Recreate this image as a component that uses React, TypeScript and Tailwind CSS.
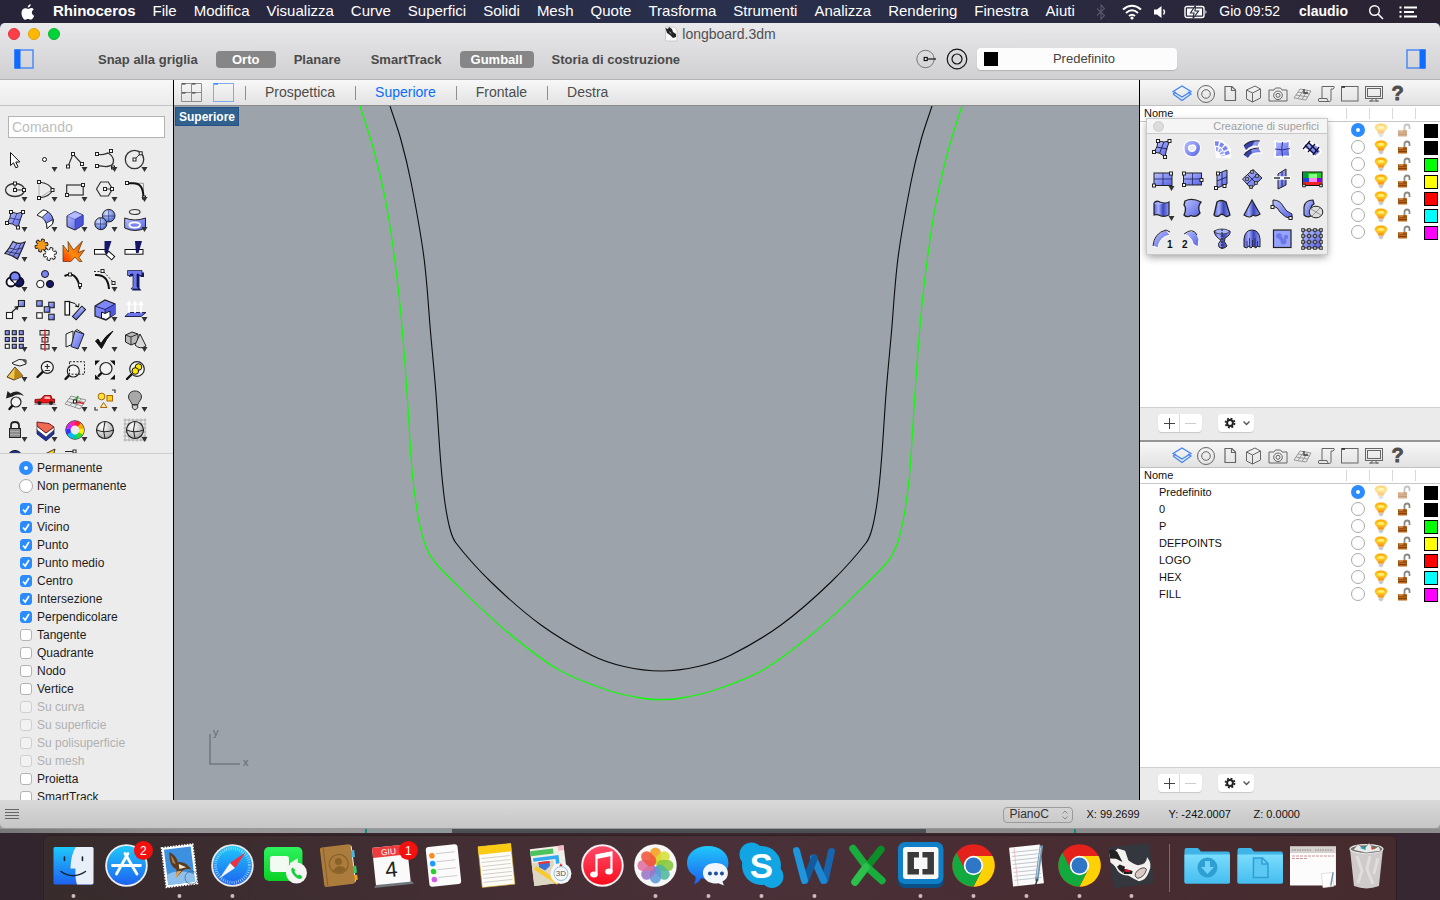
import React from "react";

type Pt = [number, number];
type Tool = { name: string; art: React.ReactNode; menu?: boolean };

const INK = "#222";
const NAVY = "#15156a";

function Nodes({ at, s = 3 }: { at: Pt[]; s?: number }) {
  return (
    <>
      {at.map(([x, y], i) => (
        <rect key={i} x={x - s / 2} y={y - s / 2} width={s} height={s} fill="#fff" stroke="#222" strokeWidth={1} />
      ))}
    </>
  );
}

function Boxes({ at, s = 5, fill = "url(#blue)" }: { at: Pt[]; s?: number; fill?: string }) {
  return (
    <>
      {at.map(([x, y], i) => (
        <rect key={i} x={x - s / 2} y={y - s / 2} width={s} height={s} fill={fill} stroke="#222" strokeWidth={1.1} />
      ))}
    </>
  );
}

function Lens({ x, y, r = 6, hx, hy }: { x: number; y: number; r?: number; hx: number; hy: number }) {
  const k = r * 0.72;
  return (
    <>
      <path d={`M${x - k} ${y + k}L${hx} ${hy}`} stroke="#111" strokeWidth={2.4} strokeLinecap="round" />
      <circle cx={x} cy={y} r={r} fill="#f4f4f4" fillOpacity={0.8} stroke="#222" strokeWidth={1.2} />
    </>
  );
}

function Cog({ x, y, fill }: { x: number; y: number; fill: string }) {
  return (
    <g transform={`translate(${x} ${y})`}>
      <g stroke="#222" strokeWidth="1">
        {[0, 60, 120, 180, 240, 300].map((a) => <rect key={a} x="-1.500" y="-6.500" width="3" height="4" rx="0.800" fill={fill} transform={`rotate(${a + 15})`} />)}
      </g>
      <circle r="4" fill={fill} />
    </g>
  );
}

function Cube() {
  return (
    <>
      <path d="M7 11L15 6.500L23 10V20L15 25L7 21.500Z" fill="url(#blue)" stroke={INK} />
      <path d="M7 11L15 6.500L23 10L15 14.500Z" fill="#b4bcff" stroke="#44a" strokeWidth={0.5} />
      <path d="M15 14.500L23 10V20L15 25Z" fill="#4a55d8" stroke="#339" strokeWidth={0.5} />
    </>
  );
}

const TOOLS: Tool[] = [
  { name: "Seleziona", art: <path d="M10.500 7.500V20.500L13.500 17.800L15.800 22.800L18 21.800L15.800 17H19.800Z" fill="#fff" stroke="#111" /> },
  { name: "Punto", menu: true, art: <circle cx="14.500" cy="14.500" r="2" fill="#fff" stroke="#111" /> },
  { name: "Polilinea", menu: true, art: <><path d="M8 21.500L13 9L22 19" fill="none" stroke="#333" strokeWidth="1.200" /><Nodes at={[[8, 21.5], [13, 9], [22, 19]]} /></> },
  { name: "Curva", menu: true, art: <><path d="M7 9C14 11 16 8 18 8C25 12 26 21 17 21.500C13 22 10 20 7 21" fill="none" stroke="#333" strokeWidth="1.300" /><Nodes at={[[7, 9], [21, 6], [7, 21], [23, 22.5]]} /></> },
  { name: "Cerchio", menu: true, art: <><circle cx="14.500" cy="14.500" r="9.200" fill="none" stroke="#333" strokeWidth="1.300" /><path d="M14.500 14.500L20.700 8.300" stroke="#333" /><Nodes at={[[14.5, 14.5], [20.7, 8.3]]} /></> },
  { name: "Ellisse", menu: true, art: <><ellipse cx="15" cy="15" rx="9.500" ry="6.500" fill="none" stroke="#333" strokeWidth="1.300" /><path d="M15 8.500V15H24" fill="none" stroke="#333" /><Nodes at={[[15, 8.5], [15, 15], [24, 15]]} /></> },
  { name: "Arco", menu: true, art: <><path d="M9 7V23M9 23L22 15" stroke="#999" strokeWidth="0.800" /><path d="M9 7C17 8 21 11 22.500 15C21 19 17 22 9 23" fill="none" stroke="#333" strokeWidth="1.200" /><Nodes at={[[9, 7], [9, 23], [22.5, 15]]} /></> },
  { name: "Rettangolo", menu: true, art: <><rect x="6.700" y="10" width="16.500" height="10" fill="none" stroke="#333" strokeWidth="1.200" /><Nodes at={[[7, 20], [23, 10]]} /></> },
  { name: "Poligono", menu: true, art: <><path d="M10.700 7H18.300L22.500 14L18.300 21H10.700L6.500 14Z" fill="none" stroke="#333" strokeWidth="1.200" /><path d="M15 14H22" stroke="#333" /><Nodes at={[[15, 14], [22, 14]]} /></> },
  { name: "Raccordo", menu: true, art: <><path d="M8 8.300H23.500V23" fill="none" stroke="#999" /><path d="M8 8.300H13C20 8.300 23 12 23.500 22" fill="none" stroke="#111" strokeWidth="2" /><Nodes at={[[7, 8], [24, 22.5]]} /></> },
  { name: "Superficie da punti", menu: true, art: <><path d="M11 7Q17 10 23 7Q20 15 18 22.500Q13 18 7 18Q11 13 11 7Z" fill="url(#blue)" stroke={INK} /><path d="M9.500 13Q15 14 20.500 15M17 8.500Q14 15 12.500 19" fill="none" stroke="#226" strokeWidth="0.700" /><Nodes at={[[11, 7], [23, 7], [7, 18], [18, 22.5]]} /></> },
  { name: "Sweep", menu: true, art: <><path d="M7 10L13 5Q21 6 23.500 15L22.500 19L17 23.500Q17 13 7 10Z" fill="url(#blue)" stroke={INK} /><path d="M7 10L13 5Q16 5 18 7L12 12.500ZM17 23.500L16.500 18L23 14.500L22.500 19Z" fill="#fff" stroke={INK} strokeWidth="0.900" /></> },
  { name: "Parallelepipedo", menu: true, art: <Cube /> },
  { name: "Sfere", menu: true, art: <><circle cx="18.700" cy="10.700" r="6.300" fill="url(#ball)" stroke={INK} /><circle cx="10.800" cy="18.700" r="6" fill="url(#ball)" stroke={INK} /><path d="M12.500 11H25M18.700 4.500V17M5 19H17M10.500 13V24.500" stroke="#226" strokeWidth="0.600" /></> },
  { name: "Proietta anello", menu: true, art: <><ellipse cx="14.700" cy="7" rx="5.300" ry="2.500" fill="none" stroke="#333" strokeWidth="1.200" /><path d="M4.700 13Q15 17 25.500 13V23Q15 28 4.700 23Z" fill="url(#blue)" stroke={INK} /><ellipse cx="14.700" cy="20" rx="5.300" ry="2.700" fill="#7c85f4" stroke="#fff" strokeWidth="1.800" /></> },
  { name: "Superficie reticolo", menu: true, art: <><path d="M5 18.500Q9 14 13 6.500Q18 10 25 7Q22 15 17.500 24Q12 20 5 18.500Z" fill="url(#blue)" stroke={INK} strokeWidth="1.200" /><path d="M9.500 13Q15 16 22 13M7 16.500Q14 18 20 19M17 8.500Q14 15 9 19.500M21 8.500Q18 16 13 21.500" fill="none" stroke="#224" strokeWidth="0.800" /></> },
  { name: "Blocchi", art: <><Cog x={11.5} y={10.5} fill="#f59a1b" /><Cog x={20} y={19} fill="#fff" /></> },
  { name: "Esplodi", art: <path d="M3 26.500V10L8.500 17L8 6.500L13.500 15L22.500 6L18 17.500L24.500 15L19 22.500L22 26.500H19L15 22L11 26.500Z" fill="url(#fire)" stroke="#531" strokeWidth="0.700" /> },
  { name: "Tronca", art: <><rect x="4.500" y="14.500" width="11.500" height="4.700" fill="#fff" stroke="#111" /><rect x="16.500" y="18" width="8" height="4.500" transform="rotate(42 20 20)" fill="#fff" stroke="#111" /><path d="M14.500 6H21.500L17 19.500L14.500 17Z" fill={NAVY} /></> },
  { name: "Suddividi", art: <><rect x="5" y="14.500" width="18" height="4.700" fill="#fff" stroke="#111" /><path d="M15 6H22L18.500 18H16Z" fill={NAVY} /></> },
  { name: "Unione booleana", menu: true, art: <g stroke="#0a0a20" strokeWidth="1.800"><circle cx="11" cy="17" r="4.500" fill="#fff" /><circle cx="19" cy="17" r="4.500" fill={NAVY} /><circle cx="15" cy="12" r="4.800" fill="#7b84f5" /><path d="M12 15L15 19L18 15Z" fill="#fff" strokeWidth="0.800" /></g> },
  { name: "Raggruppa", art: <g stroke="#111"><circle cx="15" cy="9" r="3.500" fill="#7b84f5" /><circle cx="10.300" cy="19" r="3.700" fill="#fff" /><circle cx="20" cy="19" r="3.600" fill={NAVY} /></g> },
  { name: "Modifica punti", art: <><path d="M4.500 11Q17 5 20 24" fill="none" stroke="#111" strokeWidth="2" /><Nodes at={[[10, 9.5], [20, 20]]} /></> },
  { name: "Punti di controllo", menu: true, art: <><path d="M5 10Q18 9 19 24" fill="none" stroke="#111" strokeWidth="2" /><path d="M4 6.500H12M14 7L23 17" fill="none" stroke="#333" strokeDasharray="2 1.500" /><Nodes at={[[12.5, 6], [23.5, 18]]} /></> },
  { name: "Testo", art: <><path d="M9 7.500H24V12L21 12L19.500 10.500V23L21.500 25.500H12L13.500 23V11L9 12Z" fill="#111b66" /><path d="M7.500 5.500H22V10.500H20L18.500 9H17V21.500L19 24H11L13 21.500V9H11L9.500 10.500H7.500Z" fill="#6f7af2" stroke="#113" strokeWidth="0.700" /></> },
  { name: "Sposta", menu: true, art: <><path d="M12 17L18 11.500M18 11.500L14.500 12.200M18 11.500L17 15" stroke="#222" strokeWidth="1.200" /><Boxes at={[[9.5, 20.5]]} s={6} fill="#fff" /><Boxes at={[[21.5, 8.5]]} s={6} /></> },
  { name: "Copia", art: <><Boxes at={[[9.5, 8.5], [21.5, 10], [17, 14.5], [21.5, 22]]} s={5.5} /><Boxes at={[[9.5, 20.5]]} s={5.5} fill="#fff" /></> },
  { name: "Ruota", art: <><rect x="5" y="6.500" width="4.500" height="13.500" fill="#fff" stroke="#111" strokeWidth="1.200" /><rect x="16.500" y="11" width="5" height="14" transform="rotate(42 19 18)" fill="url(#blue)" stroke="#111" /><path d="M10 7Q16 7.500 18 12M18.500 12L15 11M18.500 12L19 8.500" fill="none" stroke="#111" /></> },
  { name: "Modifica solido", menu: true, art: <><path d="M5 11L15 5L25 9V19L16 25L5 21Z" fill="#7d87f6" stroke={INK} strokeWidth="1.200" /><path d="M15 14.500L25 9V19L15 25Z" fill="#4f5ade" /><path d="M5 11L15 14.500L25 9M15 14.500V25" fill="none" stroke="#226" /><path d="M11.500 17L15 18.500L20 16V22L16 24.500L11.500 23Z" fill="#fff" stroke="#111" /></> },
  { name: "Estrudi", menu: true, art: <><path d="M5 21.500L9 17.500H26L21 21.500Z" fill="#6b76ee" stroke="#225" /><path d="M9 18V8M15 18V8M21 18V8M7 10L9 7L11 10M13 10L15 7L17 10M19 10L21 7L23 10" stroke="#fff" strokeWidth="1.600" fill="none" /></> },
  { name: "Serie", menu: true, art: <><Boxes at={[[7.3, 7.7], [14.3, 7.7], [21.3, 7.7], [7.3, 14.5], [14.3, 14.5], [21.3, 14.5], [14.3, 21.3], [21.3, 21.3]]} s={4} /><Boxes at={[[7.3, 21.3]]} s={4} fill="#fff" /></> },
  { name: "Allinea", menu: true, art: <><rect x="10" y="5.500" width="9" height="4.500" fill="#ddd" stroke="#222" /><rect x="12" y="12.500" width="6" height="4.500" fill="#ddd" stroke="#222" /><rect x="11" y="19.500" width="8" height="4.500" fill="#ddd" stroke="#222" /><path d="M15 4.500V26" stroke="#e02020" strokeWidth="1.400" /></> },
  { name: "Orienta", menu: true, art: <><path d="M6 9L13 6V19L6 22Z" fill="#f2f2f2" stroke="#222" /><path d="M15 6L24 9L18 24L11 21.500Z" fill="url(#blue)" stroke="#222" /><path d="M15 6L17 4.500L24 9" fill="none" stroke="#222" /></> },
  { name: "Controlla", menu: true, art: <path d="M5.500 16L8 14L11 18.500Q15 11 23 6Q16 14 11.500 23.500Z" fill="#111" stroke="#111" /> },
  { name: "Mesh", menu: true, art: <><path d="M5.500 10L12 7L18 9V17L11 20L5.500 17Z" fill="#b9b9b9" stroke="#222" /><path d="M5.500 10L11 12L18 9M11 12V20" fill="none" stroke="#333" /><path d="M20 9L26 21Q20 25 15 20Z" fill="#d8d8d8" stroke="#222" /></> },
  { name: "Analizza", menu: true, art: <><path d="M7 22L15 12L23 21L14 25Z" fill="#f0c84e" stroke="#432" /><path d="M15 12L23 21L14 25Z" fill="#b98619" /><path d="M12 8L19 4.500L26 5V9L20 11L14 9.500Z" fill="#f1f1f1" stroke="#222" /><path d="M22 5L26 5V9" fill="#555" /></> },
  { name: "Zoom dinamico", art: <><Lens x={17.3} y={12.3} hx={7.5} hy={22} /><path d="M17.300 9V14M14.800 11.500H19.800M14.800 15.500H19.800" stroke="#222" strokeWidth="1.100" /></> },
  { name: "Zoom finestra", art: <><Lens x={13.3} y={16} hx={5.5} hy={24} /><rect x="9.500" y="6.700" width="15" height="12.500" fill="none" stroke="#222" strokeDasharray="2 1.500" /></> },
  { name: "Zoom estensioni", art: <><Lens x={16} y={13.5} hx={8.5} hy={21} /><path d="M5 5.500H10L5 10.500ZM25 5.500H20L25 10.500ZM5 24.500V19.500L10 24.500ZM25 24.500V19.500L20 24.500Z" fill="#111" /></> },
  { name: "Zoom selezione", art: <><Lens x={17} y={14} r={7.3} hx={7} hy={24} /><circle cx="18.500" cy="12" r="3.300" fill="#ffe600" stroke="#111" /><circle cx="15.300" cy="16" r="3.300" fill="#ffe600" stroke="#111" /></> },
  { name: "Annulla vista", menu: true, art: <><Lens x={16} y={17} r={5} hx={9.5} hy={24} /><path d="M6 13.500L7.500 6L10.500 8.500Q18 3.500 24 11Q17 8 12.500 11.500Z" fill="#222" /></> },
  { name: "Viste", menu: true, art: <><path d="M4 19.500H26" stroke="#888" strokeWidth="0.700" /><path d="M5 18V14.500L11 14L14 10.500H21L22 14H24.500V18Z" fill="#e81818" stroke="#700" strokeWidth="0.800" /><path d="M14.500 14V11.500H19.500L20.500 14Z" fill="#fff" opacity="0.700" /><circle cx="9.500" cy="18" r="2" fill="#222" /><circle cx="21" cy="18" r="2" fill="#222" /></> },
  { name: "Piano di costruzione", menu: true, art: <><path d="M5 19L11 11L26 15L20 24ZM7 16.500L22 21M9 13.500L24 17.500M10 20.500L16 12.500M15 22L21 14" fill="none" stroke="#888" strokeWidth="0.900" /><path d="M16 16L18 11" stroke="#1a1" strokeWidth="1.600" /><path d="M16 17L24 18.500" stroke="#d22" strokeWidth="1.600" /><Nodes at={[[15, 16.5]]} /></> },
  { name: "Seleziona oggetti", menu: true, art: <><circle cx="11.500" cy="11.500" r="3.400" fill="#ffe23d" stroke="#a60" /><rect x="17" y="10.500" width="5.500" height="5.500" fill="#ffd21c" stroke="#a60" /><path d="M13.500 17.500L17 22.500H10.500Z" fill="#ffe9b0" stroke="#a60" /><path d="M22 5H25V8M5 22V25H8" fill="none" stroke="#333" strokeWidth="1.200" /></> },
  { name: "Mostra", menu: true, art: <><path d="M15 6C10.500 6 8.500 9 8.500 12C8.500 15 11.500 16.500 12 19.500H18C18.500 16.500 21.500 15 21.500 12C21.500 9 19.500 6 15 6Z" fill="#a8a8a8" stroke="#333" /><path d="M12.300 20H17.700V23L15 25L12.300 23Z" fill="#ccc" stroke="#333" /></> },
  { name: "Blocca", menu: true, art: <><path d="M11 14V10.500Q11 7 15 7Q19 7 19 10.500V14" fill="none" stroke="#222" strokeWidth="1.800" /><rect x="9.500" y="13.500" width="11" height="9" fill="#8d8d8d" stroke="#222" /><path d="M10 16.500H20M10 19.500H20" stroke="#bbb" strokeWidth="0.700" /></> },
  { name: "Livelli", menu: true, art: <><path d="M7 14L16 21L24 14V19L16 26L7 19Z" fill="#2233a0" stroke="#113" strokeWidth="0.700" /><path d="M7 11L16 18L24 12V15L16 22L7 15Z" fill="#fff" stroke="#333" strokeWidth="0.700" /><path d="M7 7L19 8.500L24 12L16 18L7 11Z" fill="#ef6a54" stroke="#611" strokeWidth="0.900" /></> },
  { name: "Colori", menu: true, art: <g fill="none" strokeWidth="4.500"><circle cx="15" cy="15" r="9.200" stroke="#222" strokeWidth="1" />{["#f22", "#fa0", "#fe0", "#3d2", "#0c9", "#0bf", "#33f", "#c2f", "#f2a"].map((c, i) => <path key={c} d="M15 8.300A6.700 6.700 0 0 1 19.500 10" stroke={c} transform={`rotate(${i * 40} 15 15)`} />)}</g> },
  { name: "Ombreggiatura", art: <><circle cx="15" cy="15" r="8.500" fill="url(#grey)" stroke="#222" strokeWidth="1.200" /><path d="M15 6.500Q12 15 15 23.500M6.500 15Q15 18.500 23.500 15" fill="none" stroke="#222" /></> },
  { name: "Vista griglia", menu: true, art: <><path d="M5 3.500V26.500M9 3.500V26.500M13 3.500V26.500M17 3.500V26.500M21 3.500V26.500M25 3.500V26.500M3.500 5H26.500M3.500 9H26.500M3.500 13H26.500M3.500 17H26.500M3.500 21H26.500M3.500 25H26.500" stroke="#999" strokeWidth="0.700" /><circle cx="15" cy="15" r="8.500" fill="url(#grey)" stroke="#222" strokeWidth="1.200" /><path d="M15 6.500Q12 15 15 23.500M6.500 15Q15 18.500 23.500 15" fill="none" stroke="#222" /></> },
  { name: "Render", art: <circle cx="15" cy="13" r="7.500" fill="#223a9a" stroke="#111" /> },
  { name: "Luce", art: <path d="M13 10L25 4L23 12L16 16Z" fill="#ffd21c" stroke="#432" /> },
  { name: "Quote", art: <><path d="M5 6.500H13M15 6V16" stroke="#222" strokeWidth="1.200" /><Nodes at={[[14.5, 6.5]]} /></> },
];

const SURFACES: Tool[] = [
  { name: "Superficie da punti", art: <><path d="M11 7Q17 9 22.500 7Q19 15 18 23Q13 18 7 18Q11 13 11 7Z" fill="url(#blue)" stroke={INK} /><path d="M9.500 13Q15 14 20.500 15M17 8Q14 15 12.500 19.500" fill="none" stroke="#226" /><Nodes at={[[11, 7], [22.5, 7], [7, 18], [18, 23]]} /></> },
  { name: "Superficie piana", art: <path fillRule="evenodd" d="M15 6.500C21 6 24 10 23.500 15C23 21 18 23.500 14 22.500C8 22 6.500 17 7 12C8 8 11 6.500 15 6.500ZM15 11C12 11 11 13 11.500 15C12.500 18 16 18 18 16C20 13 18 10.500 15 11Z" fill="url(#blue)" stroke="#fff" strokeWidth="1.200" /> },
  { name: "Superficie a ventaglio", art: <><path d="M7 6H15L24 15V24H9Z" fill="#fff" /><path d="M8 9.500Q18 9 21 22" fill="none" stroke="#7a86f2" strokeWidth="4.500" strokeDasharray="3.500 1.500" /><path d="M9 15Q14 15 16 22" fill="none" stroke="#98a3fa" strokeWidth="4" strokeDasharray="2 1.300" /></> },
  { name: "Loft", art: <><path d="M7 12Q12 6 23 7L21 12.500Q14 11 10 17ZM7 21Q12 14 22 14L25 19Q15 18 12 24Z" fill="url(#blue)" stroke="#fff" strokeWidth="1.200" /><path d="M7 12.500Q12 7 18 7L15 12Q11 13 9 16ZM7 21Q10 17 14 15.500L15 19Q12 21 11 24Z" fill="#3a44a8" /><path d="M7 12Q12 6 23 7M7 21Q12 14 22 14" fill="none" stroke="#224" strokeWidth="1.200" /></> },
  { name: "Patch", art: <><path d="M8 7Q15 9 22.500 7Q22 15 23 22.500Q15 22 8 23Q9 15 8 7Z" fill="url(#blue)" stroke="#fff" strokeWidth="1.600" /><path d="M8 15Q15 17 23 14.500M15.500 8Q14 15 15.500 22.500" fill="none" stroke="#228" strokeWidth="0.900" /></> },
  { name: "Rete di curve", art: <><path d="M6 14L11 7Q14 10 20 11L24 18L18 23Q14 18 6 14Z" fill="url(#blue)" stroke="#fff" strokeWidth="2" /><path d="M8 11L17 20M11 8L21 18M6 15L13 7M11 18L18 10M16 21L22 13" stroke="#113" strokeWidth="1.300" /></> },
  { name: "Piano", menu: true, art: <><rect x="7" y="9" width="18" height="12.500" fill="url(#blue)" stroke={INK} /><path d="M7 15H25M16 9V22" stroke="#226" strokeWidth="0.800" /><Nodes at={[[7, 21.5], [24, 9.5]]} /></> },
  { name: "Piano tre punti", art: <><rect x="6.500" y="9" width="18" height="12" fill="url(#blue)" stroke={INK} /><path d="M6.500 15H24.500M15.500 9V21" stroke="#226" strokeWidth="0.800" /><Nodes at={[[7, 9.5], [7, 21], [24.5, 16]]} /></> },
  { name: "Piano verticale", art: <><path d="M10 10L20 6V20L10 24Z" fill="url(#blue)" stroke={INK} /><path d="M10 17L20 13M15 8V22" stroke="#226" /><Nodes at={[[11, 9.5], [9, 24], [17.5, 22]]} /></> },
  { name: "Piano da punti", art: <><path d="M5.500 15L16 5.500L25 14L14 24.500Z" fill="url(#blue)" stroke={INK} /><path d="M10.500 10.500L19.500 19.500M20.500 10L10 20" stroke="#226" /><Nodes at={[[15, 8], [20, 12], [10, 15], [14, 23], [19, 19]]} s={2.5} /></> },
  { name: "Piano di taglio", art: <><path d="M11 10L19 5V21L11 25Z" fill="url(#blue)" stroke={INK} /><path d="M15 7.500V23" stroke="#226" /><path d="M6 14H24" stroke="#fff" strokeWidth="3.500" /><path d="M7 14H13M17 14H23" stroke="#333" strokeWidth="1.500" /></> },
  { name: "Altezza da immagine", art: <><rect x="5.500" y="8" width="19.500" height="13.500" fill="#2c2" stroke="#111" /><path d="M6 8.500H11V17H6Z" fill="#094" /><path d="M12 10H20V14H12Z" fill="#8f8" /><path d="M6 14H12V18H6Z" fill="#24d" /><path d="M12 14H20V18H12Z" fill="#f8e" /><path d="M20 14H24.500V18H20Z" fill="#80d" /><path d="M6 18H24.500V21H6Z" fill="#e22" /><Nodes at={[[7, 21.5], [24, 21.5]]} s={2.5} /></> },
  { name: "Estrusione rettilinea", menu: true, art: <><path d="M7 9Q9 6 13 8Q18 10 22 8V21Q18 23 14 22Q10 20 7 21Z" fill="url(#fold)" stroke={INK} strokeWidth="1.200" /><path d="M7 9Q10 12 14 10Q18 8 22 9" fill="#aab4ff" /></> },
  { name: "Estrusione lungo curva", art: <path d="M8 7Q15 3.500 24 8Q20 13 23 19Q19 24 14 21.500Q10 24 7 21Q10 14 7 11Z" fill="url(#blue)" stroke={INK} strokeWidth="1.300" /> },
  { name: "Estrusione rastremata", art: <path d="M10 8Q14 5 19 8L23 21Q19 24 17 21Q14 19 12 22Q8 23 7 21Z" fill="url(#fold)" stroke={INK} strokeWidth="1.300" /> },
  { name: "Estrusione a punto", art: <path d="M15 6L23 20Q19 23 16 21Q13 25 7 21Z" fill="url(#fold)" stroke={INK} strokeWidth="1.200" /> },
  { name: "Nastro", art: <><path d="M6 6Q13 6 16 12Q19 18 25 20V25Q18 24 13 18Q11 13 6 12Z" fill="url(#blue)" stroke={INK} /><Nodes at={[[5.5, 13], [23.5, 24]]} /></> },
  { name: "Estrusione raccordata", art: <><path d="M7 21V13Q8 6 16 6L17 10Q12 12 14 22Q10 24 7 21Z" fill="url(#blue)" stroke={INK} strokeWidth="1.200" /><ellipse cx="19" cy="18" rx="6.800" ry="5.800" fill="#ddd" stroke="#222" /><path d="M14 15L24 21M23 14L15 22" stroke="#777" strokeWidth="0.700" /></> },
  { name: "Sweep 1 binario", art: <><path d="M6 22Q7 9 19 6L23 11Q12 13 11 24Z" fill="url(#blue)" stroke="#fff" /><path d="M6 22Q7 9 19 6L23 8" fill="none" stroke="#222" /><text x="20" y="24" fontSize="10" fontWeight="700" fill="#111">1</text></> },
  { name: "Sweep 2 binari", art: <><path d="M7 10Q18 2 22 15L21 23L16 20Q15 13 7 10Z" fill="url(#blue)" stroke="#fff" /><path d="M7 10Q16 3 20 11" fill="none" stroke="#222" /><text x="5" y="24" fontSize="10" fontWeight="700" fill="#111">2</text></> },
  { name: "Rivoluzione", art: <><path d="M7 7Q15 4 23 7Q24 11 18 14Q16 17 20 22Q16 26 12 23Q10 20 14 16Q8 13 7 7Z" fill="url(#fold)" stroke={INK} /><ellipse cx="15" cy="7.500" rx="7" ry="2.500" fill="#aab4ff" stroke={INK} strokeWidth="0.700" /><path d="M15 5V25" stroke="#111" strokeDasharray="2 1" /></> },
  { name: "Drappeggio", art: <><path d="M7 23V15Q8 6 15 6Q22 6 23 15V23L20 22L19 24L16 22L14 24L11 22L10 24Z" fill="url(#fold)" stroke={INK} /><path d="M10 22V17M12.500 23V14M15.500 22V16M18 23V14M20.500 22V17" stroke="#224" strokeWidth="0.800" /></> },
  { name: "Campo altezze", art: <><rect x="6.500" y="6" width="17.500" height="17.500" fill="#96a2ff" stroke={INK} strokeWidth="1.200" /><g fill="#4450cc" opacity="0.500"><circle cx="12" cy="12" r="2.800" /><circle cx="19" cy="13" r="2.200" /><circle cx="16.500" cy="17.500" r="3" /><circle cx="14" cy="14.500" r="2" /></g></> },
  { name: "Griglia di punti", art: <><rect x="6" y="6" width="18" height="18" fill="url(#blue)" stroke={INK} /><path d="M6 12H24M6 18H24M12 6V24M18 6V24" stroke="#223" strokeWidth="0.600" /><Nodes s={2.5} at={[6, 12, 18, 24].flatMap((y) => [6, 12, 18, 24].map((x): Pt => [x, y]))} /></> },
];

function ToolGrid({ tools, cols }: { tools: Tool[]; cols: string }) {
  return (
    <div className={`grid ${cols}`}>
      {tools.map((t, i) => (
        <button key={i} type="button" aria-label={t.name} className="size-[30px]">
          <svg viewBox="0 0 30 30" className="size-[30px]">
            {t.art}
            {t.menu && <path d="M21.500 22H27.500L24.500 27Z" fill="#333" />}
          </svg>
        </button>
      ))}
    </div>
  );
}

function SharedPaints() {
  return (
    <svg className="absolute size-0" aria-hidden="true">
      <defs>
        <linearGradient id="blue" x1="0" y1="0" x2="1" y2="1"><stop offset="0" stopColor="#b9c2ff" /><stop offset="1" stopColor="#5562e4" /></linearGradient>
        <linearGradient id="fold"><stop offset="0" stopColor="#5560e0" /><stop offset="0.300" stopColor="#a4aeff" /><stop offset="0.600" stopColor="#3c46b8" /><stop offset="1" stopColor="#8f9bff" /></linearGradient>
        <radialGradient id="ball" cx="0.350" cy="0.300" r="0.800"><stop offset="0" stopColor="#cfe0ff" /><stop offset="1" stopColor="#3f5fd0" /></radialGradient>
        <radialGradient id="grey" cx="0.350" cy="0.300" r="0.900"><stop offset="0" stopColor="#fff" /><stop offset="1" stopColor="#999" /></radialGradient>
        <linearGradient id="fire" x1="0" y1="1" x2="1" y2="0"><stop offset="0" stopColor="#ff3000" /><stop offset="0.400" stopColor="#ff8a10" /><stop offset="1" stopColor="#e04a00" /></linearGradient>
        <linearGradient id="amber" x1="0" y1="0" x2="0" y2="1"><stop offset="0" stopColor="#ffa800" /><stop offset="0.500" stopColor="#ffd21c" /><stop offset="1" stopColor="#f7851e" /></linearGradient>
        <linearGradient id="sky" x1="0" y1="0" x2="0" y2="1"><stop offset="0" stopColor="#1fc8fb" /><stop offset="1" stopColor="#1d62f0" /></linearGradient>
        <linearGradient id="mint" x1="0" y1="0" x2="0" y2="1"><stop offset="0" stopColor="#2cf35d" /><stop offset="1" stopColor="#0bd026" /></linearGradient>
        <linearGradient id="rose" x1="0" y1="0" x2="0" y2="1"><stop offset="0" stopColor="#ff4a6a" /><stop offset="1" stopColor="#f90d1c" /></linearGradient>
        <linearGradient id="word" x1="0" y1="0" x2="0" y2="1"><stop offset="0" stopColor="#23a0e8" /><stop offset="1" stopColor="#0c5fae" /></linearGradient>
        <linearGradient id="folder" x1="0" y1="0" x2="0" y2="1"><stop offset="0" stopColor="#7bdcfd" /><stop offset="1" stopColor="#45bdf0" /></linearGradient>
      </defs>
    </svg>
  );
}

/* ---------- menu bar ---------- */

const MENUS = ["File", "Modifica", "Visualizza", "Curve", "Superfici", "Solidi", "Mesh", "Quote", "Trasforma", "Strumenti", "Analizza", "Rendering", "Finestra", "Aiuti"];

function MenuBar() {
  return (
    <header className="flex h-[23px] shrink-0 items-center justify-between bg-linear-to-r from-[#272338] via-[#28304d] to-[#2a2231] pr-[22px] pl-5 text-[14px] whitespace-nowrap text-white">
      <nav className="flex items-center gap-[17px] text-[15px]">
        <a href="#apple" aria-label="Apple">
          <svg viewBox="0 0 16 18" className="h-[18px] w-4">
            <path fill="#fff" d="M10.800 1.200C10.900 3 9.300 4.600 7.700 4.600C7.500 2.900 9.200 1.300 10.800 1.200ZM13.700 6.400C12.500 7.200 11.900 8.100 11.900 9.500C11.900 11.100 12.800 12.200 14.200 12.800C13.500 14.800 12.100 16.700 10.800 16.700C9.800 16.700 9.400 16.100 8.100 16.100C6.900 16.100 6.400 16.700 5.400 16.700C3.500 16.700 1.500 13.200 1.500 9.900C1.500 7 3.300 5.200 5.300 5.200C6.500 5.200 7.400 5.900 8.100 5.900C8.800 5.900 9.900 5.100 11.200 5.100C12.200 5.100 13.100 5.600 13.700 6.400Z" />
          </svg>
        </a>
        <a href="#rhinoceros" className="font-bold">Rhinoceros</a>
        {MENUS.map((m) => <a key={m} href={`#${m.toLowerCase()}`}>{m}</a>)}
      </nav>
      <div className="flex items-center">
        <svg viewBox="0 0 12 16" className="mr-[14px] h-4 w-3"><path d="M2 4.500L9.500 11.500L6 15V1L9.500 4.500L2 11.500" fill="none" stroke="#5c586b" strokeWidth="1.100" /></svg>
        <svg viewBox="0 0 22 16" className="mr-[10px] h-4 w-[22px]"><g fill="none" stroke="#fff" strokeWidth="2"><path d="M2 5.500Q11 -2 20 5.500M5 9Q11 3.500 17 9M8 12Q11 9.500 14 12" /></g><circle cx="11" cy="14" r="1.600" fill="#fff" /></svg>
        <svg viewBox="0 0 16 14" className="mr-[15px] h-[14px] w-4"><path d="M1 4.500H4L8.500 1V13L4 9.500H1Z" fill="#fff" /><path d="M10.500 4.500Q12.500 7 10.500 9.500" fill="none" stroke="#fff" strokeWidth="1.300" /></svg>
        <svg viewBox="0 0 24 14" className="mr-[11px] h-[14px] w-6"><rect x="1" y="1.500" width="19" height="11" rx="2" fill="none" stroke="#fff" strokeWidth="1.400" /><rect x="3" y="3.500" width="15" height="7" fill="#fff" /><path d="M11.500 0.500L6.500 8H10L9 13.500L14.500 6H11Z" fill="#fff" stroke="#2a2c48" strokeWidth="1.200" /><path d="M21.500 5Q23.500 7 21.500 9Z" fill="#fff" /></svg>
        <span className="mr-[19px]">Gio 09:52</span>
        <span className="mr-5 font-bold">claudio</span>
        <button type="button" aria-label="Cerca" className="mr-[15px]"><svg viewBox="0 0 16 16" className="size-4"><circle cx="6.500" cy="6.500" r="4.800" fill="none" stroke="#fff" strokeWidth="1.400" /><path d="M10 10L15 15" stroke="#fff" strokeWidth="1.600" /></svg></button>
        <button type="button" aria-label="Centro notifiche"><svg viewBox="0 0 19 12" className="h-3 w-[19px]"><path d="M5 1.500H18M5 6H15M5 10.500H18" stroke="#fff" strokeWidth="1.800" /><path d="M0.500 1.500H2.500M0.500 6H2.500M0.500 10.500H2.500" stroke="#fff" strokeWidth="1.800" /></svg></button>
      </div>
    </header>
  );
}

/* ---------- window chrome ---------- */

const MODES = [
  { label: "Snap alla griglia", on: false },
  { label: "Orto", on: true },
  { label: "Planare", on: false },
  { label: "SmartTrack", on: false },
  { label: "Gumball", on: true },
  { label: "Storia di costruzione", on: false },
];

function WindowHeader() {
  return (
    <div className="shrink-0 rounded-t-[5px] border-b border-[#b1b0b2] bg-linear-to-b from-[#e9e8ea] to-[#d0cfd1]">
      <div className="grid h-[22px] grid-cols-[1fr_auto_1fr] items-center px-2">
        <div className="flex gap-2">
          <button type="button" aria-label="Chiudi" className="size-3 rounded-full border border-[#e0343c] bg-[#fc3f48]" />
          <button type="button" aria-label="Riduci" className="size-3 rounded-full border border-[#e3a208] bg-[#fdb803]" />
          <button type="button" aria-label="Ingrandisci" className="size-3 rounded-full border border-[#0cb52c] bg-[#02d33a]" />
        </div>
        <h1 className="flex items-center gap-1 text-[14px] leading-[22px] text-[#505050]">
          <svg viewBox="0 0 14 16" className="h-4 w-[14px]"><path d="M1.500 1H10L13 4V15H1.500Z" fill="#fafafa" stroke="#bbb" strokeWidth="0.700" /><path d="M1.500 2L4 3L5 1L8 3L9 6L12 8V11L9 12L6 9L3 7Z" fill="#222" /><path d="M5 5L8 8L6 7Z" fill="#ddd" /></svg>
          longboard.3dm
        </h1>
      </div>
      <div className="flex h-[34px] items-center pr-[14px] pb-[6px] pl-[14px]">
        <button type="button" aria-label="Pannello sinistro">
          <svg viewBox="0 0 20 20" className="size-5"><rect x="1" y="1" width="18" height="18" fill="none" stroke="#4b8bf5" strokeWidth="1.500" /><rect x="0.500" y="0.500" width="6" height="19" fill="#0f6bff" /></svg>
        </button>
        <div className="ml-[52px] flex items-center gap-[6px] text-[13px] font-bold text-[#4a4a4a]">
          {MODES.map((m) => (
            <button
              key={m.label}
              type="button"
              aria-pressed={m.on}
              className={m.on ? "h-[17px] min-w-[60px] rounded-[4px] bg-[#868686] px-[11px] leading-[17px] text-white" : "h-[17px] px-3 leading-[17px]"}
            >
              {m.label}
            </button>
          ))}
        </div>
        <div className="ml-auto flex items-center">
          <button type="button" aria-label="Registra storia"><svg viewBox="0 0 22 22" className="mr-[9px] size-[22px]"><circle cx="10.500" cy="11" r="8.700" fill="none" stroke="#777" /><path d="M12 11H21" stroke="#111" strokeWidth="1.200" /><rect x="9.200" y="9.500" width="3" height="3" fill="#fff" stroke="#111" strokeWidth="1.200" /></svg></button>
          <button type="button" aria-label="Filtro"><svg viewBox="0 0 22 22" className="mr-[9px] size-[22px]"><circle cx="11" cy="11" r="9.800" fill="none" stroke="#111" strokeWidth="1.200" /><circle cx="11" cy="11" r="5" fill="none" stroke="#111" strokeWidth="1.200" /></svg></button>
          <button type="button" className="grid h-[22px] w-[200px] grid-cols-[14px_1fr] items-center rounded-[4px] bg-[#fcfcfc] px-[7px] text-[13px] text-[#444] shadow-[0_1px_1px_rgba(0,0,0,0.15)]">
            <span className="size-[14px] bg-black" />
            <span>Predefinito</span>
          </button>
        </div>
        <button type="button" aria-label="Pannello destro" className="ml-[229px]">
          <svg viewBox="0 0 20 20" className="size-5"><rect x="1" y="1" width="18" height="18" fill="none" stroke="#4b8bf5" strokeWidth="1.500" /><rect x="13.500" y="0.500" width="6" height="19" fill="#0f6bff" /></svg>
        </button>
      </div>
    </div>
  );
}

/* ---------- left panel ---------- */

type Snap = { label: string; on?: boolean; off?: boolean };
const SNAPS: Snap[] = [
  { label: "Fine", on: true },
  { label: "Vicino", on: true },
  { label: "Punto", on: true },
  { label: "Punto medio", on: true },
  { label: "Centro", on: true },
  { label: "Intersezione", on: true },
  { label: "Perpendicolare", on: true },
  { label: "Tangente" },
  { label: "Quadrante" },
  { label: "Nodo" },
  { label: "Vertice" },
  { label: "Su curva", off: true },
  { label: "Su superficie", off: true },
  { label: "Su polisuperficie", off: true },
  { label: "Su mesh", off: true },
  { label: "Proietta" },
  { label: "SmartTrack" },
];

const RADIO = "size-[14px] shrink-0 appearance-none rounded-full border border-[#a9a9a9] bg-white checked:border-[5px] checked:border-[#2a8cff]";

function LeftPanel() {
  return (
    <aside className="flex w-[174px] shrink-0 flex-col border-r border-black bg-[#ececec]">
      <div className="h-[26px] shrink-0 border-b border-[#c3c3c3] bg-linear-to-b from-[#f8f8f8] to-[#ebebeb]" />
      <div className="h-[348px] shrink-0 overflow-hidden border-b border-[#cfcfcf] pt-[10px]">
        <input
          aria-label="Comando"
          placeholder="Comando"
          className="mx-2 mb-[7px] block h-[22px] w-[157px] border border-[#b4b4b4] bg-white px-[3px] text-[14px] text-black placeholder:text-[#bdbdbd]"
        />
        <ToolGrid tools={TOOLS} cols="grid-cols-[repeat(5,30px)]" />
      </div>
      <div className="min-h-0 flex-1 overflow-hidden pt-[5px] pl-[19px] text-[12px] text-[#1c1c1c]">
        {["Permanente", "Non permanente"].map((l, i) => (
          <label key={l} className="flex h-[18px] items-center gap-1">
            <input type="radio" name="durata" defaultChecked={i === 0} className={RADIO} />
            {l}
          </label>
        ))}
        <div className="mt-[5px]">
          {SNAPS.map((s) => (
            <label key={s.label} className={s.off ? "flex h-[18px] items-center gap-1 text-[#b0b0b0]" : "flex h-[18px] items-center gap-1"}>
              <span className="grid w-[14px] place-items-center">
                <input
                  type="checkbox"
                  defaultChecked={s.on}
                  disabled={s.off}
                  className="size-3 appearance-none rounded-[3px] border border-[#b3b3b3] bg-white [grid-area:1/1] checked:border-[#2a8cff] checked:bg-[#2a8cff] disabled:border-[#cfcfcf] disabled:bg-[#f2f2f2]"
                />
                {s.on && <svg viewBox="0 0 12 12" className="pointer-events-none size-3 [grid-area:1/1]"><path d="M3 6.500L5.200 9L9 3" fill="none" stroke="#fff" strokeWidth="1.700" /></svg>}
              </span>
              {s.label}
            </label>
          ))}
        </div>
      </div>
    </aside>
  );
}

/* ---------- viewport ---------- */

const AXIS = 487;
const BOARD: Pt[] = [[216, 0], [227, 34], [237, 76], [250, 152], [256.7, 228], [261.7, 284], [266.7, 356], [270.7, 395], [276, 423], [282, 437], [317, 476], [367, 519], [417, 549], [450, 560.5], [487, 565]];
const OUTLINE: Pt[] = [[186, 0], [200, 45], [213.3, 104], [224, 180], [230, 245], [234, 302], [238.3, 367], [243.3, 406], [249.3, 433], [258.3, 453], [290, 486], [333.3, 526], [383.3, 563], [433, 584], [466.7, 592], [487, 593.5]];

/* Mirrors the half profile about the long axis and joins the points with
   cubic segments whose handles scale with the length of each segment. */
function symmetricCurve(half: Pt[]): string {
  const pts: Pt[] = [...half, ...half.slice(0, -1).reverse().map(([x, y]): Pt => [2 * AXIS - x, y])];
  const dirs = pts.map((_, i): Pt => {
    const a = pts[Math.max(i - 1, 0)];
    const b = pts[Math.min(i + 1, pts.length - 1)];
    const len = Math.hypot(b[0] - a[0], b[1] - a[1]);
    return [(b[0] - a[0]) / len, (b[1] - a[1]) / len];
  });
  let d = `M${pts[0][0]} ${pts[0][1]}`;
  for (let i = 0; i < pts.length - 1; i++) {
    const p = pts[i];
    const q = pts[i + 1];
    const k = Math.hypot(q[0] - p[0], q[1] - p[1]) / 3;
    d += `C${p[0] + dirs[i][0] * k} ${p[1] + dirs[i][1] * k} ${q[0] - dirs[i + 1][0] * k} ${q[1] - dirs[i + 1][1] * k} ${q[0]} ${q[1]}`;
  }
  return d;
}

function Viewport() {
  return (
    <main className="flex min-w-0 flex-1 flex-col">
      <div className="flex h-[26px] shrink-0 items-center border-b border-[#8b8b8b] bg-linear-to-b from-[#f8f8f8] to-[#e2e2e2] pl-[7px] text-[14px] text-[#4c4c4c]">
        <button type="button" aria-label="Quattro viste" className="mr-[11px]"><svg viewBox="0 0 21 19" className="h-[19px] w-[21px]"><path d="M0.500 0.500H20.500V18.500H0.500ZM10.500 0.500V18.500M0.500 9.500H20.500" fill="none" stroke="#8c8c8c" /><path d="M1 1H4.500M11 1H14.500M1 10H4.500M11 10H14.500" stroke="#333" /></svg></button>
        <button type="button" aria-label="Vista singola" className="mr-[11px]"><svg viewBox="0 0 21 19" className="h-[19px] w-[21px]"><rect x="0.500" y="0.500" width="20" height="18" fill="none" stroke="#7fabf5" /><path d="M1 1H5" stroke="#06f" /></svg></button>
        <div role="tablist" className="flex items-center">
          {["Prospettica", "Superiore", "Frontale", "Destra"].map((v) => (
            <React.Fragment key={v}>
              <span className="mr-[19px] h-[14px] w-px bg-[#8f8f8f]" />
              <button type="button" role="tab" aria-selected={v === "Superiore"} className={v === "Superiore" ? "mr-5 text-[#0a6cff]" : "mr-5"}>{v}</button>
            </React.Fragment>
          ))}
        </div>
      </div>
      <div className="grid min-h-0 flex-1 overflow-hidden bg-[#9da3ab]">
        <svg viewBox="0 0 965 694" preserveAspectRatio="xMidYMin meet" className="size-full [grid-area:1/1]" role="img" aria-label="Longboard vista superiore">
          <path d={symmetricCurve(OUTLINE)} fill="none" stroke="#10fb08" strokeWidth="1.300" />
          <path d={symmetricCurve(BOARD)} fill="none" stroke="#0c0c0c" strokeWidth="1.100" />
          <path d="M36 628V658H66" fill="none" stroke="#74787e" strokeWidth="1.500" />
          <text x="39" y="630" fontSize="11" fill="#666a70">y</text>
          <text x="69" y="660" fontSize="11" fill="#666a70">x</text>
        </svg>
        <span className="mt-px ml-px h-[19px] justify-self-start border border-[#245188] bg-[#30618f] px-[3px] text-[12px] leading-[18px] font-bold text-white [grid-area:1/1]">Superiore</span>
      </div>
    </main>
  );
}

/* ---------- right panels ---------- */

const PANEL_ICONS: { name: string; art: React.ReactNode }[] = [
  { name: "Livelli", art: <g stroke="#3d84f7" strokeWidth="1.200"><path d="M3 14L12 20.500L21 14L18 12M3 14L6 12" fill="none" /><path d="M3 11.500L12 6L21 11.500L12 17Z" fill="none" /></g> },
  { name: "Proprietà", art: <><circle cx="12" cy="14" r="8.500" /><circle cx="12" cy="14" r="4.300" /></> },
  { name: "Note", art: <path d="M7 6.500H14L17.500 10V20.500H7ZM13.500 6.500V10.500H17.500" strokeWidth="1.200" /> },
  { name: "Oggetto", art: <path d="M4.500 10L13 6L18.500 9V18L10.500 22L4.500 19ZM4.500 10L10.500 13L18.500 9M10.500 13V22" /> },
  { name: "Viste", art: <><path d="M3 10H8L9.500 8H14.500L16 10H21V21H3Z" /><circle cx="12" cy="15.300" r="4.300" /><circle cx="12" cy="15.300" r="2" /></> },
  { name: "Piani", art: <><path d="M4 18L10 9L21 11L16 20ZM6 15L18 17M8 12L20 14M8 18.500L14 9.500M12 19.500L17.500 10.500" stroke="#999" /><path d="M14 9V13H18" stroke="#444" strokeWidth="1.400" /></> },
  { name: "Cronologia", art: <path d="M8 18V6.500H20Q21 8 19 9H17V20.500Q16 22 14 21.500H5Q3.500 20 5 18.500H13Q13 21 15 21.500" /> },
  { name: "Finestra", art: <><rect x="3.500" y="6.500" width="16.500" height="14.500" /><path d="M4 7H7" stroke="#222" strokeWidth="1.500" /></> },
  { name: "Schermo", art: <><rect x="3.500" y="6.500" width="17" height="12" /><rect x="5.500" y="8.500" width="13" height="8" /><path d="M10 18.500V21H7.500M14 18.500V21H16.500M7.500 21H16.500" /></> },
  { name: "Aiuto", art: <text x="5.500" y="20" fontSize="20" fontWeight="700" fill="#4e4e4e" stroke="#4e4e4e" strokeWidth="0.800">?</text> },
];

const LAYERS: { name: string; color: string }[] = [
  { name: "Predefinito", color: "#000000" },
  { name: "0", color: "#000000" },
  { name: "P", color: "#00ff00" },
  { name: "DEFPOINTS", color: "#ffff00" },
  { name: "LOGO", color: "#ff0000" },
  { name: "HEX", color: "#00ffff" },
  { name: "FILL", color: "#ff00ff" },
];

function Bulb() {
  return (
    <svg viewBox="0 0 14 15" className="mx-auto mt-px h-[15px] w-[14px]">
      <path d="M7 0.700C3 0.700 1 2.300 1 4.200C1 6.500 4 7.500 4.500 10.500H9.500C10 7.500 13 6.500 13 4.200C13 2.300 11 0.700 7 0.700Z" fill="url(#amber)" stroke="#f0a010" strokeWidth="0.500" />
      <ellipse cx="7" cy="4.300" rx="3" ry="1.500" fill="#ffee7a" />
      <path d="M4.700 11H9.300V13L7 14.500L4.700 13Z" fill="#c9c9c9" />
    </svg>
  );
}

function Padlock() {
  return (
    <svg viewBox="0 0 14 15" className="mx-auto mt-px h-[15px] w-[14px]">
      <path d="M7.500 7.500V4Q7.500 1.500 10 1.500Q12.500 1.500 12.500 4V6" fill="none" stroke="#8b8b85" strokeWidth="1.800" />
      <rect x="1" y="7" width="9" height="6.500" rx="0.500" fill="#b8641c" />
      <path d="M1 9H10M1 11.500H10" stroke="#7a3c08" strokeWidth="0.900" />
      <path d="M2 8H6" stroke="#f0b070" />
    </svg>
  );
}

function LayerPanel({ id, namesHidden }: { id: string; namesHidden?: boolean }) {
  return (
    <section className="flex min-h-0 flex-col bg-white">
      <div className="flex h-[26px] shrink-0 border-b border-[#c0c0c0] bg-linear-to-b from-[#f7f7f7] to-[#e2e2e2] pl-[30px]">
        {PANEL_ICONS.map((p) => (
          <button key={p.name} type="button" aria-label={p.name} className="h-[25px] w-6">
            <svg viewBox="0 0 24 25" className="h-[25px] w-6 overflow-visible" fill="none" stroke="#666">{p.art}</svg>
          </button>
        ))}
      </div>
      <div className="min-h-0 flex-1 overflow-hidden">
        <table className="w-full table-fixed border-separate border-spacing-0 text-[#111]">
          <colgroup>
            <col />
            <col className="w-[23px]" />
            <col className="w-[23px]" />
            <col className="w-[23px]" />
            <col className="w-[25px]" />
          </colgroup>
          <thead>
            <tr className="h-4">
              <th className="border-b border-[#c8c8c8] pl-1 text-left text-[11px] leading-[15px] font-normal">Nome</th>
              {[0, 1, 2, 3].map((n) => (
                <th key={n} className="border-b border-[#c8c8c8] p-0"><span className="block h-[11px] border-l border-[#d8d8d8]" /></th>
              ))}
            </tr>
          </thead>
          <tbody>
            {LAYERS.map((l, i) => (
              <tr key={l.name} className="h-[17px] align-top">
                <td className="p-0 pl-[19px] text-[11px] leading-[17px]">{namesHidden ? "" : l.name}</td>
                <td className="p-0"><input type="radio" name={id} aria-label={`Livello corrente ${l.name}`} defaultChecked={i === 0} className={`mx-auto mt-px block ${RADIO}`} /></td>
                <td className={i === 0 ? "p-0 opacity-50" : "p-0"}><Bulb /></td>
                <td className={i === 0 ? "p-0 opacity-50" : "p-0"}><Padlock /></td>
                <td className="p-0"><span className="mt-[2px] ml-[9px] block size-[14px] border border-black" style={{ backgroundColor: l.color }} /></td>
              </tr>
            ))}
          </tbody>
        </table>
      </div>
      <div className="flex h-[33px] shrink-0 items-center gap-4 border-t border-[#d0d0d0] bg-[#ebebeb] pb-[3px] pl-[18px]">
        <div className="flex h-[18px] rounded-[4px] bg-white shadow-[0_1px_1px_rgba(0,0,0,0.15)]">
          <button type="button" aria-label="Aggiungi livello" className="w-[22px] border-r border-[#ddd]"><svg viewBox="0 0 22 18" className="h-[18px] w-[22px]"><path d="M6 9.500H17M11.500 4V15" stroke="#444" /></svg></button>
          <button type="button" aria-label="Rimuovi livello" className="w-[22px]"><svg viewBox="0 0 22 18" className="h-[18px] w-[22px]"><path d="M5 9.500H16" stroke="#ccc" /></svg></button>
        </div>
        <button type="button" aria-label="Azioni" className="h-[18px] w-9 rounded-[4px] bg-white shadow-[0_1px_1px_rgba(0,0,0,0.15)]">
          <svg viewBox="0 0 36 18" className="h-[18px] w-9"><circle cx="12" cy="9" r="2.900" fill="none" stroke="#222" strokeWidth="2" /><circle cx="12" cy="9" r="4.500" fill="none" stroke="#222" strokeWidth="1.800" strokeDasharray="1.900 1.634" /><path d="M25.500 7.500L28.500 10.500L31.500 7.500" fill="none" stroke="#555" strokeWidth="1.400" /></svg>
        </button>
      </div>
    </section>
  );
}

function RightPanel() {
  return (
    <aside className="relative grid w-[301px] shrink-0 grid-rows-[360fr_2px_358fr] border-l border-black">
      <LayerPanel id="livelli-a" namesHidden />
      <div className="bg-[#959595]" />
      <LayerPanel id="livelli-b" />
      <div className="absolute top-[39px] left-[7px] bg-[#ececec] shadow-[0_3px_8px_rgba(0,0,0,0.4)] ring-1 ring-[#c9c9c9]">
        <div className="flex h-[15px] items-center justify-between border-b border-[#c8c8c8] bg-[#f5f5f5] pr-2 pl-[6px] text-[11px] leading-[14px] text-[#a0a0a0]">
          <button type="button" aria-label="Chiudi" className="size-[11px] rounded-full border border-[#cfcfcf] bg-[#dcdcdc]" />
          Creazione di superfici
        </div>
        <ToolGrid tools={SURFACES} cols="grid-cols-[repeat(6,30px)]" />
      </div>
    </aside>
  );
}

function StatusBar() {
  return (
    <footer className="flex h-[29px] shrink-0 items-center justify-between rounded-b-[5px] border-b border-[#999] bg-linear-to-b from-[#d9d9d9] to-[#c6c6c6] pt-px pr-[140px] pl-[5px] text-[11px] text-[#111]">
      <button type="button" aria-label="Menu"><svg viewBox="0 0 14 11" className="h-[11px] w-[14px]"><path d="M0 0.500H14M0 3.500H14M0 6.500H14M0 9.500H14" stroke="#666" /></svg></button>
      <div className="flex items-center">
        <div className="grid">
          <select aria-label="Piano" className="h-4 w-[70px] appearance-none rounded-[4px] border border-[#9b9b9b] pl-[6px] text-[12px] leading-[13px] text-[#333] [grid-area:1/1]">
            <option>PianoC</option>
          </select>
          <svg viewBox="0 0 8 12" className="pointer-events-none mr-1 h-3 w-2 self-center justify-self-end [grid-area:1/1]"><path d="M1.500 4.500L4 2L6.500 4.500M1.500 7.500L4 10L6.500 7.500" fill="none" stroke="#8a8a8a" /></svg>
        </div>
        <span className="ml-[14px] w-[82px]">X: 99.2699</span>
        <span className="w-[85px]">Y: -242.0007</span>
        <span>Z: 0.0000</span>
      </div>
    </footer>
  );
}

/* ---------- dock ---------- */

const Chrome = () => (
  <g transform="translate(26.500 29.500)">
    <circle r="21.300" fill="#e5211c" />
    <path d="M0 -9.500H19.100A21.300 21.300 0 0 1 0 21.300L8.300 4.800Z" fill="#fdd205" />
    <path d="M-8.300 4.800L-17 -12.800A21.300 21.300 0 0 0 0 21.300L8.300 4.800Z" fill="#12a93f" />
    <circle r="9.700" fill="#fff" />
    <circle r="8" fill="#2f76c6" />
  </g>
);

const Badge = ({ n }: { n: string }) => (
  <g><circle cx="43.500" cy="14.500" r="9.500" fill="#f3110f" /><text x="43.500" y="19" fontSize="12" textAnchor="middle" fill="#fff">{n}</text></g>
);

const Folder = ({ children }: { children?: React.ReactNode }) => (
  <g><path d="M3.500 15Q3.500 12 5.500 12H17L20 15.500H47Q49 15.500 49 18V46Q49 47.500 47 47.500H5.500Q3.500 47.500 3.500 46Z" fill="#3fb4e6" /><path d="M3.500 18.500H49V46Q49 47.500 47 47.500H5.500Q3.500 47.500 3.500 46Z" fill="url(#folder)" />{children}</g>
);

const PETALS = ["#f79d1e", "#d5df3a", "#85c73e", "#4fb79a", "#5f9cdb", "#9b75c9", "#dd6fa0", "#f0553c"];

const DOCK: { name: string; live?: boolean; art: React.ReactNode }[] = [
  { name: "Finder", live: true, art: <><rect x="6.500" y="11" width="40" height="37.500" rx="1.500" fill="url(#sky)" /><path d="M29 11H45Q46.500 11 46.500 12.500V47Q46.500 48.500 45 48.500H30Q28 42 28.500 32.500H23.500Q24 18 29 11Z" fill="#e8eff8" /><path d="M17.500 21V24.500M35.500 21V24.500" stroke="#123" strokeWidth="1.600" strokeLinecap="round" /><path d="M14 35.500Q26 44 38.500 35.500" fill="none" stroke="#123" strokeWidth="1.500" strokeLinecap="round" /></> },
  { name: "App Store", art: <><circle cx="26.500" cy="29.500" r="21.300" fill="#eee" /><circle cx="26.500" cy="29.500" r="19.500" fill="url(#sky)" /><path d="M28 17.500L16.500 38M25 17.500L37 38M12.500 29.500H40.500" stroke="#fff" strokeWidth="2.800" strokeLinecap="round" /><Badge n="2" /></> },
  { name: "Mail", live: true, art: <g transform="rotate(-7 26.500 29.500)"><rect x="11" y="10" width="31" height="39.500" fill="#fff" stroke="#fff" strokeWidth="2" strokeDasharray="1.600 1.200" /><rect x="13" y="12" width="27" height="35.500" fill="#3d8fe0" /><path d="M13 37Q26 32 40 40V47.500H13Z" fill="#8dc0ec" /><path d="M18 15Q24 18 25.500 26Q33 26 38 35Q32 33 29 35L22 41L23 33Q16 29 18 15Z" fill="#5b3a1d" /><path d="M19 18Q22 22 23 28L20 26Z" fill="#a98352" /><path d="M26 28L33 32L26 33Z" fill="#f4e6d0" /><path d="M23 35L28 35L21 42Z" fill="#e2a55a" /><circle cx="37" cy="43" r="6.500" fill="none" stroke="#456" strokeWidth="0.600" /></g> },
  { name: "Safari", live: true, art: <><circle cx="26.500" cy="29.500" r="21.300" fill="#e9e9e9" /><circle cx="26.500" cy="29.500" r="19.500" fill="url(#sky)" /><circle cx="26.500" cy="29.500" r="17" fill="none" stroke="#cfe8ff" strokeWidth="3" strokeDasharray="0.600 1.625" /><path d="M39.500 16.500L29 32L24 27Z" fill="#f2303b" /><path d="M13.500 42.500L24 27L29 32Z" fill="#f3f3f3" /></> },
  { name: "FaceTime", art: <><rect x="5" y="11" width="38.500" height="34" rx="5" fill="url(#mint)" /><rect x="11" y="20" width="19" height="16" rx="2.500" fill="#f1fbf1" /><path d="M31 27L39 22V34L31 30Z" fill="#e0f8e0" /><circle cx="37.500" cy="37" r="10.500" fill="#f4f4f4" /><path d="M33.500 31.500Q31.500 33 33 36.500Q36 42 40.500 43Q43 43 43.500 41L41 38.500L39 39.500Q36.500 38 35.500 35.500L36.500 34Z" fill="#15cf3a" /></> },
  { name: "Contatti", art: <g transform="rotate(-7 26.500 29.500)"><rect x="14" y="11" width="28" height="37" rx="1.500" fill="#eee" /><path d="M40 16H44V23H40Z" fill="#4db5e8" /><path d="M40 32H44V39H40Z" fill="#3c6" /><path d="M40 41H44V46H40Z" fill="#f4a020" /><rect x="10" y="9.500" width="31" height="40" rx="2" fill="#ab7c3c" /><path d="M13.500 9.500V49.500" stroke="#86602c" /><circle cx="27" cy="28" r="9.500" fill="none" stroke="#8a6229" strokeWidth="1.300" /><circle cx="27" cy="25.500" r="3.500" fill="#8a6229" /><path d="M20.500 34Q27 26 33.500 34Q27 40 20.500 34Z" fill="#8a6229" /></g> },
  { name: "Calendario", art: <><g transform="rotate(-6 26.500 29.500)"><path d="M9 47H45L47 50H7Z" fill="#6f777d" /><rect x="9" y="10" width="35" height="37.500" rx="1" fill="#fafafa" /><path d="M9 10H44V20H9Z" fill="#ee3b3b" /><text x="25" y="18.500" fontSize="8.500" textAnchor="middle" fill="#fff">GIU</text><text x="26" y="41" fontSize="22" textAnchor="middle" fill="#222">4</text></g><Badge n="1" /></> },
  { name: "Promemoria", art: <g transform="rotate(-6 26.500 29.500)"><rect x="10.500" y="9.500" width="32" height="40" rx="3" fill="#fbfbfb" /><g stroke="#ccc"><path d="M20 17H39M20 25H39M20 33H39M20 41H39" /></g><circle cx="16" cy="18.500" r="2.800" fill="#ff8a1e" /><circle cx="16" cy="26.500" r="2.800" fill="#1e9bff" /><circle cx="16" cy="34.500" r="2.800" fill="#2ad02a" /><circle cx="16" cy="42.500" r="2.800" fill="#d45be8" /></g> },
  { name: "Note", art: <g transform="rotate(-6 26.500 29.500)"><rect x="10" y="9" width="33" height="41" fill="#fdfcf6" stroke="#c9a227" strokeWidth="0.600" /><path d="M10 9H43V17H10Z" fill="#fbcb13" /><path d="M12 21H41M12 25H41M12 29H41M12 33H41M12 37H41M12 41H41M12 45H41" stroke="#ccc" strokeWidth="0.900" /></g> },
  { name: "Mappe", art: <><g transform="rotate(-7 26.500 29.500)"><rect x="9" y="11" width="34" height="37" fill="#f2efe6" /><path d="M9 13H32V18H9Z" fill="#4cc35e" /><path d="M37 11H43V16H37Z" fill="#f5b8c5" /><path d="M11 22H35V48" fill="none" stroke="#35a9f0" strokeWidth="3.500" /><path d="M9 25H31V48H9Z" fill="#ddd6c2" /><path d="M12 30L33 48" stroke="#fbc92d" strokeWidth="4" /><path d="M16 25H27V30L21.500 34L16 30Z" fill="#3b74d8" /><path d="M16 25H27V27H16Z" fill="#e33" /></g><circle cx="38" cy="37.500" r="10.500" fill="#f6f6f6" /><circle cx="38" cy="37.500" r="7" fill="none" stroke="#8abde0" /><text x="38" y="40.500" fontSize="8" textAnchor="middle" fill="#555">3D</text><path d="M38 27L39.500 30H36.500Z" fill="#e22" /></> },
  { name: "iTunes", art: <><circle cx="26.500" cy="29.500" r="21.300" fill="#f3eef0" /><circle cx="26.500" cy="29.500" r="19.300" fill="url(#rose)" /><path d="M20.500 38V19.500L35.500 16.500V35" fill="none" stroke="#fff" strokeWidth="2.200" /><path d="M20.500 18.500L35.500 15.500V20L20.500 23Z" fill="#fff" /><ellipse cx="18" cy="38.500" rx="3.800" ry="3" fill="#fff" /><ellipse cx="33" cy="35.500" rx="3.800" ry="3" fill="#fff" /></> },
  { name: "Foto", live: true, art: <><circle cx="26.500" cy="29.500" r="21.300" fill="#f7f7f7" />{PETALS.map((c, i) => <rect key={c} x="21" y="11.500" width="11" height="17" rx="5.500" fill={c} opacity="0.880" transform={`rotate(${i * 45} 26.500 29.500)`} />)}</> },
  { name: "Messaggi", live: true, art: <><path d="M26 10C38 10 46.500 17 46.500 27C46.500 37 38 43 26 43Q22 43 19 42.300Q17 47 12 48Q14.500 44 13.500 40.500Q5 36 5 27C5 17 14 10 26 10Z" fill="url(#sky)" /><path d="M33.500 27C41 27 46 31 46 37C46 41 44 44 40.500 45.500L42 49.500L36.500 47.200C27 48.500 21 43.500 21 37C21 31 26 27 33.500 27Z" fill="#f1f6fd" /><g fill="#1f4f93"><circle cx="28" cy="37.500" r="2" /><circle cx="34" cy="37.500" r="2" /><circle cx="40" cy="37.500" r="2" /></g></> },
  { name: "Skype", live: true, art: <><circle cx="16.500" cy="18.500" r="12" fill="#12a5e4" /><circle cx="37" cy="40.500" r="11.500" fill="#12a5e4" /><circle cx="26.500" cy="29.500" r="19.500" fill="#12a5e4" /><text x="26.500" y="42" fontSize="35" fontWeight="700" textAnchor="middle" fill="#fff">S</text></> },
  { name: "Word", live: true, art: <g fill="none" strokeLinecap="round" strokeLinejoin="round" strokeWidth="7"><path d="M43.500 15.500L37 44.500" stroke="#1765ae" /><path d="M25.500 22L35.500 44.500" stroke="#1b86d1" /><path d="M26.500 22L17.500 44.500" stroke="#125b9f" /><path d="M8.500 14.500L16.500 44.500" stroke="#1e95dc" /></g> },
  { name: "Excel", art: <g fill="none" strokeLinecap="round" strokeWidth="7.500"><path d="M40 13.500L14 46" stroke="#0b8d28" /><path d="M12 12.500L25 30L41 44.500" stroke="#18ad3c" /><path d="M25 31L14 46" stroke="#2cc04d" /></g> },
  { name: "Brackets", live: true, art: <><rect x="4" y="8" width="45.500" height="44" rx="7" fill="#0a4f86" /><rect x="4" y="6" width="45.500" height="42" rx="7" fill="#0f80c8" /><rect x="9" y="11" width="35.500" height="32" rx="3" fill="#f8f8f8" /><path d="M25 16H13.500V38.500H25V33H20V21.500H25ZM28.500 16H40V38.500H28.500V33H33.500V21.500H28.500Z" fill="#3a3a3a" /></> },
  { name: "Chrome", live: true, art: <Chrome /> },
  { name: "TextEdit", live: true, art: <g transform="rotate(-6 26.500 29.500)"><rect x="11" y="10" width="31" height="39" fill="#fbfbfb" /><path d="M13 15H40M13 19H40M13 23H40M13 27H40M13 31H40M13 35H40M13 39H40M13 43H40" stroke="#bcc3cc" strokeWidth="0.900" /><path d="M16 10V49" stroke="#f3b0b0" strokeWidth="0.700" /><path d="M43.500 11L35 46" stroke="#6f93ad" strokeWidth="3.400" /><path d="M42.500 13L35.500 42" stroke="#c9dbe8" strokeWidth="0.900" /><path d="M36 44L33.500 50" stroke="#333" strokeWidth="1.500" /></g> },
  { name: "Chrome app", live: true, art: <Chrome /> },
  { name: "Rhinoceros", live: true, art: <g transform="rotate(-7 26.500 29.500)"><rect x="6" y="9" width="41" height="41" rx="3" fill="#34373d" /><path d="M6 15Q12 14 15 11L22 14L24 24Q30 30 34 30Q42 30 43 23Q48 31 43 38Q39 46 32 46Q27 43 22 39Q15 38 12 33Q10 27 6 24Z" fill="#f4f1ef" /><path d="M9 11L14 14L18 25L12 21L6 20V12Z" fill="#222" /><path d="M15 27L20 30L17 36Q13 33 12 29Z" fill="#222" /><path d="M17 31L27 35L26 38L18 37Z" fill="#1b1b1b" /><path d="M19 32L25 34L24 36L19 35Z" fill="#d0142e" /><path d="M31 36Q38 31 41 35Q38 43 31 43Q27 40 31 36Z" fill="#dccac6" stroke="#333" strokeWidth="0.800" /></g> },
];

const STACKS: { name: string; art: React.ReactNode }[] = [
  { name: "Download", art: <Folder><circle cx="26.500" cy="31.500" r="10" fill="#2f9fd3" /><path d="M24 25H29V31H33L26.500 38L20 31H24Z" fill="#6fd2f8" /></Folder> },
  { name: "Documenti", art: <Folder><path d="M19.500 22H28.500L34 27.500V41.500H19.500ZM28 22V28H34" fill="#5cc9f5" stroke="#2f9fd3" strokeWidth="1.500" /></Folder> },
  { name: "Documento", art: <><rect x="3" y="10.500" width="46" height="39" fill="#fcfcfc" /><path d="M3 10.500H49V17H3Z" fill="#d6d1cf" /><path d="M5 14H24M28 14H46" stroke="#8c8583" strokeDasharray="1.500 1" /><path d="M5 20H47M5 22.500H20" stroke="#b77" strokeWidth="0.800" strokeDasharray="3 1" /><g transform="rotate(-7 41 43)"><rect x="35" y="37" width="11" height="14" fill="#fff" stroke="#ccc" strokeWidth="0.600" /><path d="M47 37L43 50" stroke="#6f93ad" strokeWidth="1.500" /></g></> },
  { name: "Cestino", art: <><path d="M10 13L14 50Q26.500 55 39 50L43 13Z" fill="#d9d7d6" opacity="0.930" /><ellipse cx="26.500" cy="13" rx="16.500" ry="4.500" fill="#77716f" stroke="#e9e9e9" strokeWidth="1.300" /><path d="M13 14L18 8L24 13L29 7L34 13L39 10L41 15L26 17Z" fill="#e9e9e9" stroke="#555" strokeWidth="0.600" /><path d="M20 12L25 10L26 14Z" fill="#29a" /><path d="M31 11L35 12L32 14Z" fill="#c42" /><path d="M17 20L22 35L18 47M30 20L27 33L33 48M38 22L34 38" fill="none" stroke="#fff" strokeWidth="3" opacity="0.350" /></> },
];

function DockItem({ name, art, live }: { name: string; art: React.ReactNode; live?: boolean }) {
  return (
    <button type="button" aria-label={name} className="min-w-0 flex-1">
      <svg viewBox="0 0 53 64" className="h-16 w-full overflow-visible">
        {art}
        {live && <circle cx="26.500" cy="60" r="2" fill="#d3b9be" />}
      </svg>
    </button>
  );
}

function Dock() {
  return (
    <div className="flex shrink-0 justify-center bg-linear-to-r from-[#32252d] via-[#3d262c] to-[#372733] px-11 pt-[3px]">
      <nav aria-label="Dock" className="flex flex-1 rounded-t-[5px] bg-linear-to-r from-[#372b2c] via-[#4a3038] to-[#452b2d] px-[3px] ring-1 ring-[#2c2023]">
        {DOCK.map((d) => <DockItem key={d.name} {...d} />)}
        <span className="mx-[11px] my-2 w-px bg-[#84696c]" />
        {STACKS.map((d) => <DockItem key={d.name} {...d} />)}
      </nav>
    </div>
  );
}

export default function App() {
  return (
    <div className="flex h-screen flex-col overflow-hidden bg-[#28304d] font-['Liberation_Sans',Arial,sans-serif]">
      <SharedPaints />
      <MenuBar />
      <div className="flex min-h-0 flex-1 flex-col bg-linear-to-b from-[#28304d] from-50% to-[#999] to-50%">
        <WindowHeader />
        <div className="flex min-h-0 flex-1">
          <LeftPanel />
          <Viewport />
          <RightPanel />
        </div>
        <StatusBar />
      </div>
      <div className="flex h-1 shrink-0">
        <div className="flex-[366] border-r-2 border-[#0c8f78] bg-linear-to-r from-[#777] via-[#969696] to-[#999]" />
        <div className="flex-[85] bg-[#8e9799]" />
        <div className="flex-[474] bg-[#4c5054]" />
        <div className="flex-[148] border-r-2 border-[#0c8f78] bg-[#8c8c8c]" />
        <div className="flex-[365] bg-[#8c8c8c]" />
      </div>
      <Dock />
    </div>
  );
}
